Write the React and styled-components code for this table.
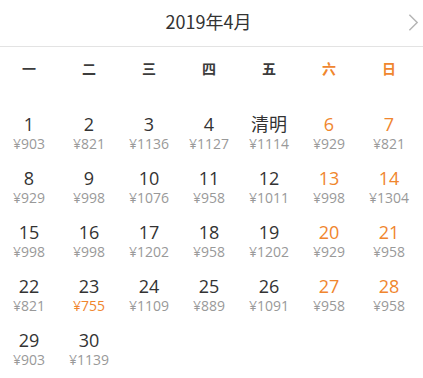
import React from 'react';
import styled, { createGlobalStyle } from 'styled-components';

const GlobalStyle = createGlobalStyle`
  body {
    margin: 0;
    background: #fff;
    font-family: "Open Sans", "Noto Sans CJK SC", sans-serif;
  }
`;

const ORANGE = '#f0862e';

const weekdays = ['一', '二', '三', '四', '五', '六', '日'];

const prices = [
  903, 821, 1136, 1127, 1114, 929, 821,
  929, 998, 1076, 958, 1011, 998, 1304,
  998, 998, 1202, 958, 1202, 929, 958,
  821, 755, 1109, 889, 1091, 958, 958,
  903, 1139,
];

const days = prices.map((price, i) => {
  const day = i + 1;
  return {
    day,
    label: day === 5 ? '清明' : String(day),
    price,
    weekend: i % 7 >= 5,
    cheap: day === 23,
  };
});

const Calendar = () => {
  return (
    <Wrapper>
      <Header>
        <Title>2019年4月</Title>
        <Next viewBox="0 0 12 20">
          <path d="M1.5 1.5 L10 10 L1.5 18.5" />
        </Next>
      </Header>
      <Weekdays>
        {weekdays.map((w, i) => (
          <Weekday key={w} weekend={i >= 5}>{w}</Weekday>
        ))}
      </Weekdays>
      <Days>
        {days.map((d) => (
          <Day key={d.day}>
            <DayNum weekend={d.weekend}>{d.label}</DayNum>
            <Price cheap={d.cheap}>¥{d.price}</Price>
          </Day>
        ))}
      </Days>
    </Wrapper>
  );
};

const Wrapper = styled.div`
  width: 423px;
  height: 378px;
  overflow: hidden;
  background: #fff;
`;

const Header = styled.div`
  position: relative;
  height: 46px;
  display: flex;
  align-items: center;
  justify-content: center;
  border-bottom: 1px solid #e3e3e3;
`;

const Title = styled.div`
  font-family: "Noto Sans CJK SC", sans-serif;
  font-size: 18px;
  color: #333;
  margin-left: -6px;
  margin-top: -4px;
`;

const Next = styled.svg`
  position: absolute;
  right: 4px;
  top: 13px;
  width: 11px;
  height: 19px;
  fill: none;
  stroke: #b5b5b5;
  stroke-width: 1.6;
`;

const Weekdays = styled.div`
  display: grid;
  grid-template-columns: repeat(7, 60px);
  margin-left: -1px;
  padding-top: 11px;
`;

const Weekday = styled.div`
  font-family: "Noto Sans CJK SC", sans-serif;
  text-align: center;
  font-size: 14px;
  font-weight: 700;
  line-height: 20px;
  color: ${({ weekend }) => (weekend ? ORANGE : '#3c3c3c')};
`;

const Days = styled.div`
  display: grid;
  grid-template-columns: repeat(7, 60px);
  grid-auto-rows: 54px;
  margin-left: -1px;
  padding-top: 35px;
`;

const Day = styled.div`
  display: flex;
  flex-direction: column;
  align-items: center;
`;

const DayNum = styled.div`
  font-size: 18px;
  line-height: 22px;
  color: ${({ weekend }) => (weekend ? ORANGE : '#333')};
`;

const Price = styled.div`
  font-size: 14px;
  line-height: 18px;
  color: ${({ cheap }) => (cheap ? ORANGE : '#999')};
`;

export default function App() {
  return (
    <>
      <GlobalStyle />
      <Calendar />
    </>
  );
}
